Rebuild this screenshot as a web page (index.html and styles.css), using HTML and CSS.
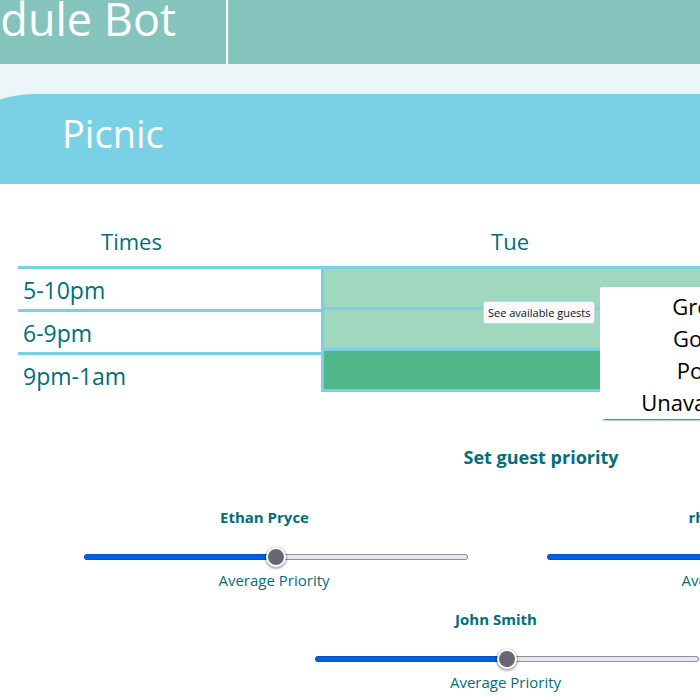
FILE: index.html
```html
<!DOCTYPE html>
<html lang="en">
<head>
<meta charset="utf-8">
<title>Schedule Bot</title>
<link rel="stylesheet" href="styles.css">
</head>
<body>
<header class="topbar">
  <div class="brand">Schedule Bot</div>
</header>
<main class="card">
  <h1 class="card-title">Picnic</h1>
  <section class="schedule">
    <table class="times">
      <thead><tr><th scope="col">Times</th></tr></thead>
      <tbody>
        <tr><td>5-10pm</td></tr>
        <tr><td>6-9pm</td></tr>
        <tr><td>9pm-1am</td></tr>
      </tbody>
    </table>
    <table class="days">
      <thead><tr><th scope="col" class="day">Tue</th><th></th></tr></thead>
      <tbody>
        <tr><td class="good"></td><td class="good"></td></tr>
        <tr><td class="good"></td><td class="good"></td></tr>
        <tr><td class="great"></td><td class="great"></td></tr>
      </tbody>
    </table>
    <div class="tooltip" role="tooltip">See available guests</div>
    <ul class="menu">
      <li>Great</li>
      <li>Good</li>
      <li>Poor</li>
      <li>Unavailable</li>
    </ul>
  </section>
  <section class="priorities">
    <h2>Set guest priority</h2>
    <div class="guests">
      <div class="guest">
        <label for="g1">Ethan Pryce</label>
        <input id="g1" type="range" min="0" max="2" value="1">
        <span>Average Priority</span>
      </div>
      <div class="guest">
        <label for="g2" class="wide-name">rh</label>
        <input id="g2" type="range" min="0" max="2" value="1">
        <span>Average Priority</span>
      </div>
      <div class="guest">
        <label for="g3">John Smith</label>
        <input id="g3" type="range" min="0" max="2" value="1">
        <span>Average Priority</span>
      </div>
    </div>
  </section>
</main>
</body>
</html>
```
FILE: styles.css
```css
* {
  box-sizing: border-box;
}

body {
  margin: 0;
  overflow: hidden;
  background: #ecf6f9;
  color: #006f7b;
  font-family: "Segoe UI", "Open Sans", "Noto Sans", sans-serif;
}

.topbar {
  display: flex;
  height: 64px;
  background: #84c4bd;
}

.brand {
  display: flex;
  justify-content: flex-end;
  width: 228px;
  padding-right: 50px;
  border-right: 2px solid #fff;
  color: #fff;
  font-size: 45px;
  line-height: 38px;
  white-space: nowrap;
}

/* The card is wider than the window and runs past both of its sides. */
.card {
  width: calc(100% + 516px);
  margin: 30px 0 0 -67px;
  border-radius: 100px 100px 0 0;
  background: #fff;
  overflow: hidden;
}

.card-title {
  margin: 0;
  padding: 0 129px 12px;
  background: #7ad1e6;
  color: #fff;
  font-size: 38px;
  font-weight: 400;
  line-height: 78px;
}

.schedule {
  position: relative;
  display: flex;
  align-items: flex-start;
  padding: 0 85px;
}

table {
  border-collapse: separate;
  border-spacing: 0;
  table-layout: fixed;
}

.times {
  width: 303px;
}

.days {
  flex: 1;
}

th {
  height: 82px;
  padding: 32px 0 0;
  font-size: 22px;
  font-weight: 400;
  line-height: 48px;
}

.times th {
  padding-right: 76px;
}

.day {
  width: 378px;
}

td {
  border-top: 3px solid #7ad1e6;
}

.times td {
  height: 43px;
  padding: 5px 5px 3px;
  font-size: 23px;
  line-height: 32px;
}

.days td {
  height: 41px;
  padding: 0;
}

.days td:first-child {
  border-left: 3px solid #7ad1e6;
}

.days tr:last-child td {
  height: 44px;
  border-bottom: 3px solid #7ad1e6;
}

.good {
  background: #9fd8bf;
}

.great {
  background: #51b788;
}

.tooltip {
  position: absolute;
  top: 117px;
  left: 550px;
  padding: 2px 4px;
  border: 1px solid #d3d0dc;
  border-radius: 3px;
  background: #f9f9fb;
  color: #15141a;
  font-size: 11px;
  line-height: 17px;
  white-space: nowrap;
}

.menu {
  position: absolute;
  top: 103px;
  left: 667px;
  width: 202px;
  margin: 0;
  padding: 3px 0 1px;
  border-radius: 2px;
  background: #fff;
  box-shadow: 2px 2px 2px -1px #006f7b;
  color: #000;
  font-size: 22px;
  line-height: 32px;
  list-style: none;
  text-align: center;
}

.priorities {
  padding-top: 45px;
}

h2 {
  margin: 0;
  font-size: 18px;
  line-height: 34px;
  text-align: center;
}

.guests {
  display: flex;
  flex-wrap: wrap;
  justify-content: center;
  padding: 30px 179px 0 111px;
}

.guest {
  display: flex;
  flex: 0 0 50%;
  flex-direction: column;
  align-items: center;
  height: 102px;
  font-size: 15px;
  line-height: 26px;
}

.guest label {
  padding-right: 22px;
  font-weight: 700;
}

.guest span {
  padding-right: 3px;
}

.guest .wide-name {
  width: 100px;
}

input[type="range"] {
  width: 384px;
  height: 20px;
  margin: 17px 0 0;
  appearance: none;
  background: none;
}

input[type="range"]::-webkit-slider-runnable-track {
  height: 6px;
  border: 1px solid transparent;
  border-radius: 3px;
  background:
    linear-gradient(90deg, #0060df 50%, #e9e9ed 50%) padding-box,
    linear-gradient(90deg, #0054c4 50%, #8f8f9d 50%) border-box;
}

input[type="range"]::-webkit-slider-thumb {
  width: 20px;
  height: 20px;
  margin-top: -8px;
  appearance: none;
  border: 2px solid #fff;
  border-radius: 50%;
  background: #676774;
  box-shadow: 0 1px 2px 1px rgba(0, 0, 0, 0.3);
}
```
